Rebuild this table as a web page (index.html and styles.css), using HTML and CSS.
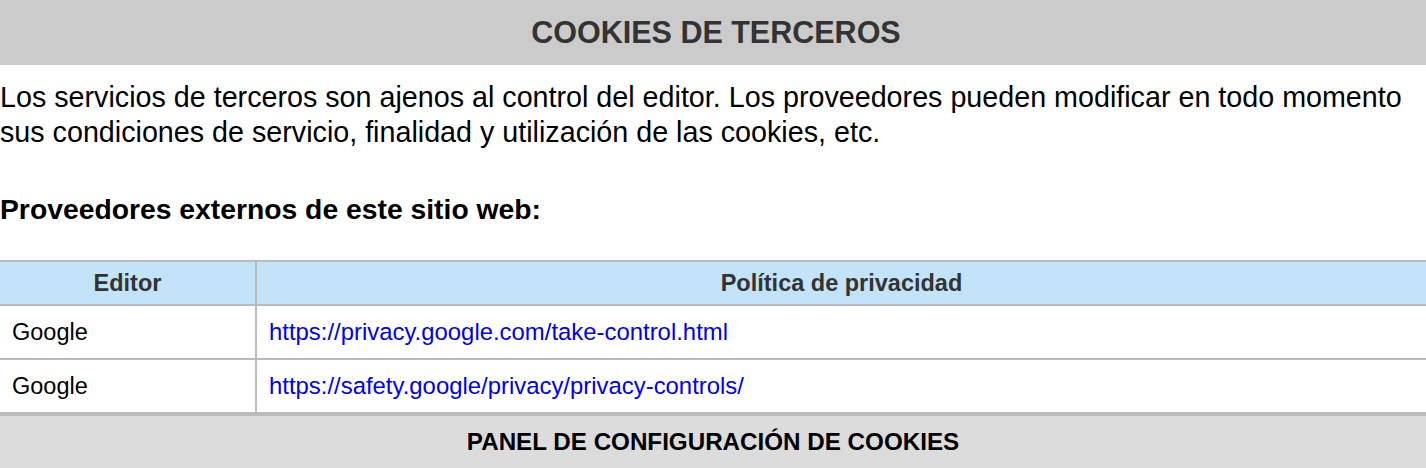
FILE: index.html
```html
<!DOCTYPE html>
<html lang="es">
<head>
<meta charset="utf-8">
<title>Cookies de terceros</title>
<link rel="stylesheet" href="styles.css">
</head>
<body>
<section class="section">
  <h2 class="section-title">COOKIES DE TERCEROS</h2>
  <p class="intro">Los servicios de terceros son ajenos al control del editor. Los proveedores pueden modificar en todo momento sus condiciones de servicio, finalidad y utilización de las cookies, etc.</p>
  <p class="subtitle">Proveedores externos de este sitio web:</p>
  <table class="providers">
    <thead>
      <tr><th class="col-editor">Editor</th><th>Política de privacidad</th></tr>
    </thead>
    <tbody>
      <tr><td>Google</td><td><a href="#">https://privacy.google.com/take-control.html</a></td></tr>
      <tr><td>Google</td><td><a href="#">https://safety.google/privacy/privacy-controls/</a></td></tr>
    </tbody>
  </table>
  <div class="panel">PANEL DE CONFIGURACIÓN DE COOKIES</div>
</section>
</body>
</html>
```

FILE: styles.css
```css
html, body {
  margin: 0;
  padding: 0;
  background: #fff;
}
body {
  font-family: "Liberation Sans", Arial, Helvetica, sans-serif;
  color: #000;
}
.section-title {
  margin: 0;
  height: 65px;
  display: flex;
  align-items: center;
  justify-content: center;
  padding-left: 6px;
  background: #cbcbcb;
  color: #333;
  font-size: 30.5px;
  font-weight: bold;
}
.intro {
  margin: 15px 0 0;
  font-size: 28.7px;
  line-height: 35px;
}
.subtitle {
  margin: 42px 0 0;
  font-size: 28.3px;
  line-height: 35px;
  font-weight: bold;
}
.providers {
  margin-top: 33px;
  width: 100%;
  border-collapse: collapse;
  border-top: 2px solid #bbb;
}
.providers th {
  background: #c3e4f8;
  color: #333;
  font-size: 23.5px;
  font-weight: bold;
  height: 42px;
  padding: 0;
  text-align: center;
  border-bottom: 2px solid #bbb;
}
.providers .col-editor {
  width: 255px;
  border-right: 2px solid #bbb;
}
.providers td {
  height: 52px;
  padding: 0 0 0 12px;
  font-size: 23.5px;
  border-bottom: 2px solid #bbb;
}
.providers td:first-child {
  border-right: 2px solid #bbb;
}
.providers a {
  color: #0000ee;
  font-size: 23.9px;
  text-decoration: none;
}
.panel {
  border-top: 2px solid #bbb;
  background: #dcdcdc;
  height: 52px;
  display: flex;
  align-items: center;
  justify-content: center;
  font-size: 24.2px;
  font-weight: bold;
}
```
